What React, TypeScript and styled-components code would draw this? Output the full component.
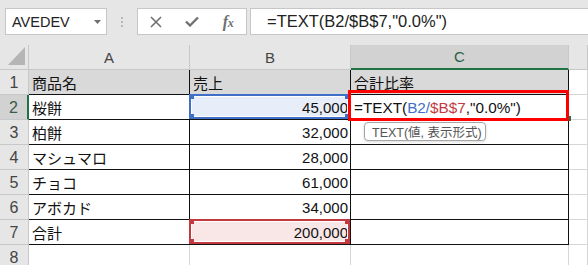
import styled, { createGlobalStyle } from "styled-components";

const GlobalStyle = createGlobalStyle`
  html, body {
    margin: 0;
    padding: 0;
    background: #ffffff;
  }
  body {
    font-family: "Liberation Sans", "Noto Sans CJK JP", sans-serif;
  }
`;

const Window = styled.div`
  width: 588px;
  height: 265px;
  overflow: hidden;
  background: #e6e6e6;
`;

const Toolbar = styled.div`
  display: flex;
  align-items: flex-start;
  height: 45px;
  padding: 8px 0 0 5px;
  box-sizing: border-box;
`;

const NameBox = styled.div`
  width: 102px;
  height: 27px;
  box-sizing: border-box;
  border: 1px solid #c6c6c6;
  background: #ffffff;
  display: flex;
  align-items: center;
  justify-content: space-between;
  padding: 0 5px 0 6px;
  font-size: 14.5px;
  color: #222;
`;

const Grip = styled.div`
  width: 30px;
  height: 27px;
  display: flex;
  flex-direction: column;
  align-items: center;
  justify-content: center;
  gap: 2px;
`;

const GripDot = styled.span`
  width: 2px;
  height: 2px;
  background: #b8b8b8;
`;

const FxGroup = styled.div`
  width: 110px;
  height: 27px;
  box-sizing: border-box;
  border: 1px solid #c6c6c6;
  background: #ffffff;
  display: flex;
`;

const FxButton = styled.div`
  width: 36px;
  height: 100%;
  display: flex;
  align-items: center;
  justify-content: center;
  color: #6f6f6f;
`;

const FxLabel = styled.span`
  font-family: "Liberation Serif", serif;
  font-style: italic;
  font-weight: bold;
  font-size: 16px;
  color: #707070;
  letter-spacing: -0.5px;
`;

const FxSub = styled.span`
  font-size: 12px;
`;

const FormulaInput = styled.div`
  flex: 1;
  margin-left: 3px;
  height: 27px;
  box-sizing: border-box;
  border: 1px solid #c6c6c6;
  border-right: none;
  background: #ffffff;
  display: flex;
  align-items: center;
  padding-left: 16px;
  font-size: 16.5px;
  color: #222;
  white-space: nowrap;
`;

const Sheet = styled.div`
  display: grid;
  grid-template-columns: 29px 161px 161px 218px 1fr;
  grid-auto-rows: 25px;
  background: #ffffff;
`;

const Corner = styled.div`
  background: #e6e6e6;
  border-right: 1px solid #c8c8c8;
  border-bottom: 1px solid #c8c8c8;
  box-sizing: border-box;
`;

const ColHeader = styled.div<{ $selected?: boolean }>`
  box-sizing: border-box;
  background: ${(p) => (p.$selected ? "#d2d2d2" : "#e6e6e6")};
  border-right: 1px solid #c8c8c8;
  border-bottom: ${(p) => (p.$selected ? "2px solid #217346" : "1px solid #c8c8c8")};
  display: flex;
  align-items: center;
  justify-content: center;
  font-size: 15px;
  color: ${(p) => (p.$selected ? "#2a5e45" : "#444")};
`;

const RowHeader = styled.div<{ $selected?: boolean }>`
  box-sizing: border-box;
  background: ${(p) => (p.$selected ? "#d2d2d2" : "#e6e6e6")};
  border-right: ${(p) => (p.$selected ? "2px solid #217346" : "1px solid #c8c8c8")};
  border-bottom: 1px solid #c8c8c8;
  display: flex;
  align-items: center;
  justify-content: center;
  padding-top: 1px;
  font-size: 16px;
  color: ${(p) => (p.$selected ? "#3a5a4a" : "#444")};
`;

const Cell = styled.div<{ $fill?: string; $num?: boolean; $line: string }>`
  position: relative;
  box-sizing: border-box;
  background: ${(p) => p.$fill ?? "#ffffff"};
  border-right: 1px solid ${(p) => p.$line};
  border-bottom: 1px solid ${(p) => p.$line};
  display: flex;
  align-items: center;
  justify-content: ${(p) => (p.$num ? "flex-end" : "flex-start")};
  padding: 1px ${(p) => (p.$num ? "2px" : "0")} 0 3px;
  font-size: 15px;
  color: #111;
  white-space: nowrap;
`;

const RefBox = styled.div<{ $color: string }>`
  position: absolute;
  left: -1px;
  top: -1px;
  right: 0;
  bottom: 0;
  border: 2px solid ${(p) => p.$color};
  box-shadow: inset 0 0 0 1px #ffffff;
  z-index: 2;
`;

const Handle = styled.span<{ $color: string; $x: "left" | "right"; $y: "top" | "bottom" }>`
  position: absolute;
  width: 5px;
  height: 5px;
  background: ${(p) => p.$color};
  ${(p) => p.$x}: -2px;
  ${(p) => p.$y}: -2px;
`;

const Ref = styled.span<{ $color?: string }>`
  color: ${(p) => p.$color ?? "inherit"};
`;

const FormulaText = styled.span`
  font-size: 15.3px;
`;

const CalloutFrame = styled.div`
  position: absolute;
  left: -3px;
  top: -5px;
  right: -1px;
  bottom: -2px;
  border: 3px solid #ff0000;
  z-index: 3;
`;

const FillHandle = styled.span`
  position: absolute;
  right: -3px;
  bottom: -2px;
  width: 5px;
  height: 5px;
  background: #217346;
  z-index: 2;
`;

const Tip = styled.div`
  position: absolute;
  left: 13px;
  top: 27px;
  width: 122px;
  height: 19px;
  box-sizing: border-box;
  border: 1px solid #a6a6a6;
  border-radius: 4px;
  background: #ffffff;
  box-shadow: 0 1px 3px rgba(0, 0, 0, 0.15);
  display: flex;
  align-items: center;
  padding-left: 7px;
  font-size: 12.5px;
  color: #555;
  white-space: nowrap;
  z-index: 3;
`;

const BLUE = "#3f6fc6";
const RED = "#c3393f";
const BLACK = "#111111";
const GRID = "#d6d6d6";

const Formula = () => (
  <FormulaText>
    =TEXT(<Ref $color={BLUE}>B2/</Ref>
    <Ref $color={RED}>$B$7</Ref>,"0.0%")
  </FormulaText>
);

const rows: [string, string][] = [
  ["商品名", "売上"],
  ["桜餅", "45,000"],
  ["柏餅", "32,000"],
  ["マシュマロ", "28,000"],
  ["チョコ", "61,000"],
  ["アボカド", "34,000"],
  ["合計", "200,000"],
  ["", ""],
];

function RefHighlight({ color }: { color: string }) {
  return (
    <RefBox $color={color}>
      <Handle $color={color} $x="left" $y="top" />
      <Handle $color={color} $x="left" $y="bottom" />
      <Handle $color={color} $x="right" $y="top" />
      <Handle $color={color} $x="right" $y="bottom" />
    </RefBox>
  );
}

export default function App() {
  return (
    <Window>
      <GlobalStyle />
      <Toolbar>
        <NameBox>
          AVEDEV
          <svg width="7" height="4" viewBox="0 0 7 4">
            <path d="M0 0h7L3.5 4z" fill="#6f6f6f" />
          </svg>
        </NameBox>
        <Grip>
          <GripDot />
          <GripDot />
          <GripDot />
        </Grip>
        <FxGroup>
          <FxButton>
            <svg width="12" height="12" viewBox="0 0 12 12">
              <path d="M1 1l10 10M11 1L1 11" stroke="#6f6f6f" strokeWidth="1.6" fill="none" />
            </svg>
          </FxButton>
          <FxButton>
            <svg width="14" height="11" viewBox="0 0 14 11">
              <path d="M1 5.5l4 4L13 1.5" stroke="#6f6f6f" strokeWidth="2.3" fill="none" />
            </svg>
          </FxButton>
          <FxButton>
            <FxLabel>
              f<FxSub>x</FxSub>
            </FxLabel>
          </FxButton>
        </FxGroup>
        <FormulaInput>=TEXT(B2/$B$7,"0.0%")</FormulaInput>
      </Toolbar>

      <Sheet>
        <Corner>
          <svg width="28" height="24" viewBox="0 0 28 24">
            <path d="M25 2v18H8z" fill="#b5b5b5" />
          </svg>
        </Corner>
        <ColHeader>A</ColHeader>
        <ColHeader>B</ColHeader>
        <ColHeader $selected>C</ColHeader>
        <ColHeader />

        {rows.map(([name, value], i) => {
          const r = i + 1;
          const line = r <= 7 ? BLACK : GRID;
          const headFill = r === 1 ? "#d9d9d9" : undefined;
          const bFill = r === 2 ? "#e8eef9" : r === 7 ? "#f9e7e8" : headFill;
          return [
            <RowHeader key={`h${r}`} $selected={r === 2}>
              {r}
            </RowHeader>,
            <Cell key={`a${r}`} $line={line} $fill={headFill}>
              {name}
            </Cell>,
            <Cell key={`b${r}`} $line={line} $fill={bFill} $num={r > 1}>
              {value}
              {r === 2 && <RefHighlight color={BLUE} />}
              {r === 7 && <RefHighlight color={RED} />}
            </Cell>,
            <Cell key={`c${r}`} $line={line} $fill={headFill}>
              {r === 1 && "合計比率"}
              {r === 2 && (
                <>
                  <Formula />
                  <CalloutFrame />
                  <FillHandle />
                  <Tip>TEXT(値, 表示形式)</Tip>
                </>
              )}
            </Cell>,
            <Cell key={`d${r}`} $line={GRID} />,
          ];
        })}
      </Sheet>
    </Window>
  );
}
